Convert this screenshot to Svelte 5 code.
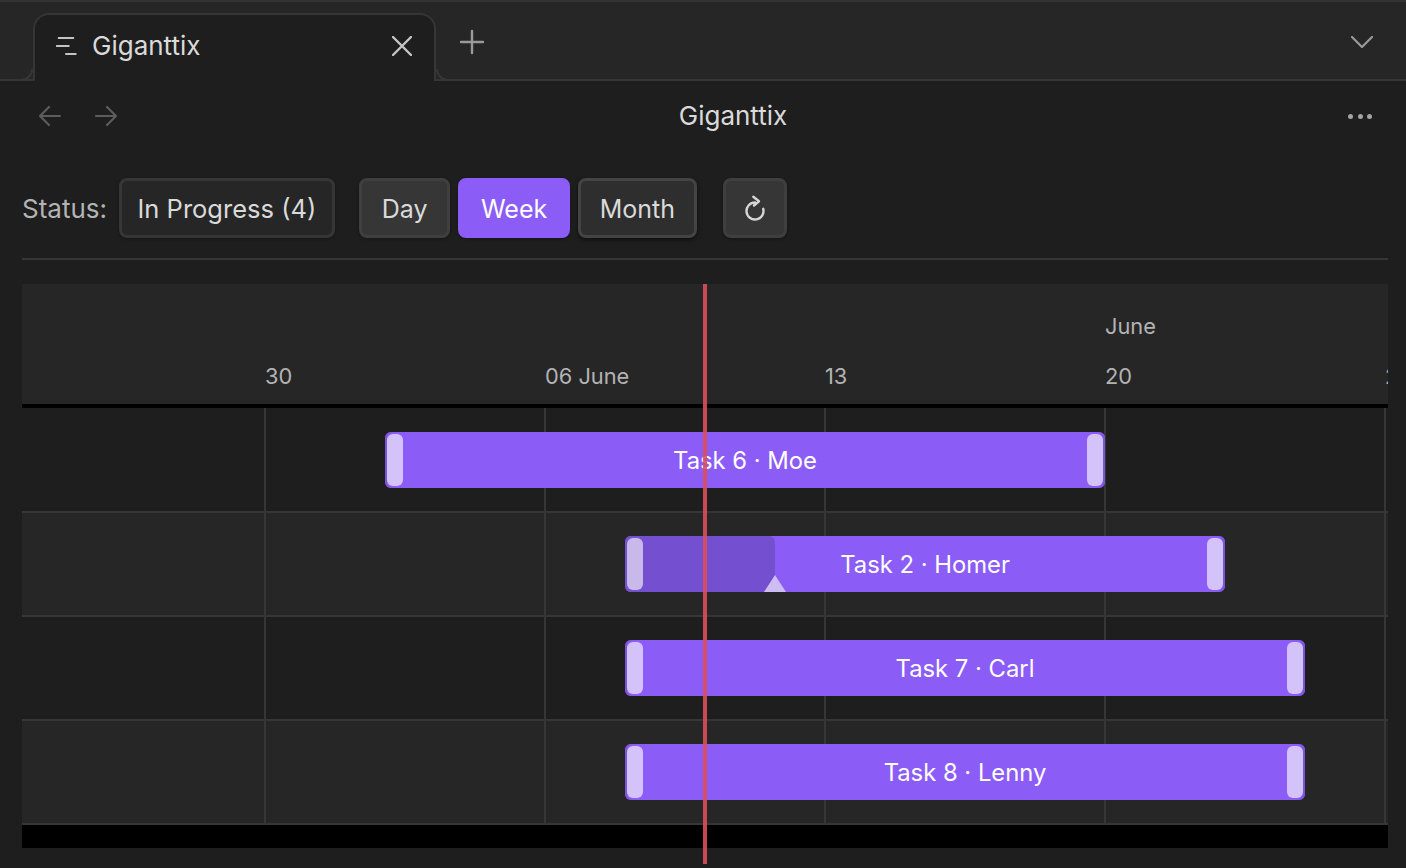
<script>
  const ticks = [
    { x: 243, label: '30' },
    { x: 523, label: '06 June' },
    { x: 803, label: '13' },
    { x: 1083, label: '20' },
    { x: 1363, label: '27' },
  ];

  const tasks = [
    { name: 'Task 6 · Moe', left: 363, width: 720 },
    { name: 'Task 2 · Homer', left: 603, width: 600, progress: 150 },
    { name: 'Task 7 · Carl', left: 603, width: 680 },
    { name: 'Task 8 · Lenny', left: 603, width: 680 },
  ];

  let view = $state('Week');
</script>

<div class="app">
  <div class="tabbar">
    <div class="tab">
      <svg class="tab-icon" width="24" height="24" viewBox="0 0 24 24" fill="none" stroke="#c4c4c4" stroke-width="2" stroke-linecap="round">
        <path d="M2.7 4h14.6M.7 12h12M10 20h9.7" />
      </svg>
      <span class="tab-title">Giganttix</span>
      <svg class="tab-close" width="20" height="20" viewBox="0 0 20 20" fill="none" stroke="#c4c4c4" stroke-width="2.4" stroke-linecap="round">
        <path d="M1 1l18 18M19 1L1 19" />
      </svg>
    </div>
    <svg class="tab-add" width="26" height="26" viewBox="0 0 26 26" fill="none" stroke="#9a9a9a" stroke-width="2.4" stroke-linecap="round">
      <path d="M13 2v22M2 13h22" />
    </svg>
    <svg class="tab-more" width="22" height="12" viewBox="0 0 22 12" fill="none" stroke="#9a9a9a" stroke-width="2.2" stroke-linecap="round" stroke-linejoin="round">
      <path d="M1 1l10 10L21 1" />
    </svg>
  </div>

  <div class="viewhead">
    <div class="nav">
      <svg width="24" height="22" viewBox="0 0 24 22" fill="none" stroke="#5c5c5c" stroke-width="2.2" stroke-linecap="round" stroke-linejoin="round">
        <path d="M22 11H2M11 2l-9 9 9 9" />
      </svg>
      <svg width="24" height="22" viewBox="0 0 24 22" fill="none" stroke="#5c5c5c" stroke-width="2.2" stroke-linecap="round" stroke-linejoin="round">
        <path d="M2 11h20M13 2l9 9-9 9" />
      </svg>
    </div>
    <div class="viewtitle">Giganttix</div>
    <div class="dots"><i></i><i></i><i></i></div>
  </div>

  <div class="toolbar">
    <span class="status">Status:</span>
    <button class="btn filter">In Progress (4)</button>
    <div class="modes">
      {#each ['Day', 'Week', 'Month'] as mode}
        <button class="btn" class:active={view === mode} class:raised={mode === 'Month'} onclick={() => (view = mode)}>{mode}</button>
      {/each}
    </div>
    <button class="btn refresh" aria-label="Refresh">
      <svg width="20" height="26" viewBox="0 -1 20 26" fill="none" stroke="#d6d6d6" stroke-width="2.4" stroke-linecap="round" stroke-linejoin="round">
        <path d="M10 6.5A8.5 8.5 0 1 0 18.2 12.8" />
        <path d="M8.3 .8L14 5.3 9 9.5" />
      </svg>
    </button>
  </div>

  <div class="chart">
    <div class="head">
      <span class="month">June</span>
      {#each ticks as tick}
        <span class="tick" style="left: {tick.x}px">{tick.label}</span>
      {/each}
    </div>
    <div class="body">
      {#each tasks as task}
        <div class="row">
          <div class="bar" style="left: {task.left}px; width: {task.width}px">
            {#if task.progress}
              <div class="progress" style="width: {task.progress}px"></div>
              <div class="marker" style="left: {task.progress - 11}px"></div>
            {/if}
            <span class="handle start" class:dim={task.progress}></span>
            <span class="bar-label">{task.name}</span>
            <span class="handle end"></span>
          </div>
        </div>
      {/each}
      {#each ticks as tick}
        <div class="gridline" style="left: {tick.x - 1}px"></div>
      {/each}
    </div>
    <div class="foot"></div>
    <div class="today"></div>
  </div>
</div>

<style>
  :global(body) {
    background: #1e1e1e;
    font-family: Inter, "Liberation Sans", sans-serif;
    overflow: hidden;
  }

  .app {
    height: 868px;
    overflow: hidden;
  }

  .tabbar {
    display: flex;
    align-items: flex-end;
    height: 77px;
    padding-left: 33px;
    background: #262626;
    border-top: 2px solid #333;
    border-bottom: 2px solid #363636;
  }

  .tab {
    position: relative;
    display: flex;
    align-items: center;
    box-sizing: border-box;
    width: 403px;
    height: 68px;
    margin-bottom: -2px;
    padding: 0 22px 4px 21px;
    background: #1e1e1e;
    border: 2px solid #363636;
    border-bottom: none;
    border-radius: 16px 16px 0 0;
  }

  .tab::before,
  .tab::after {
    content: '';
    position: absolute;
    bottom: 0;
    width: 12px;
    height: 12px;
    box-sizing: border-box;
    border-bottom: 2px solid #363636;
  }

  .tab::before {
    left: -14px;
    border-right: 2px solid #363636;
    border-bottom-right-radius: 12px;
  }

  .tab::after {
    right: -14px;
    border-left: 2px solid #363636;
    border-bottom-left-radius: 12px;
  }

  .tab-icon {
    flex: none;
    margin-right: 12px;
  }

  .tab-title {
    flex: 1;
    margin-bottom: 2px;
    font-size: 26px;
    color: #dadada;
  }

  .tab-close {
    flex: none;
  }

  .tab-add {
    margin: 0 0 24px 23px;
  }

  .tab-more {
    margin: 0 33px 31px auto;
  }

  .viewhead {
    display: flex;
    align-items: center;
    height: 70px;
    padding: 0 34px 0 38px;
  }

  .nav {
    display: flex;
    gap: 32px;
    width: 80px;
  }

  .viewtitle {
    flex: 1;
    margin-bottom: 2px;
    padding-left: 56px;
    text-align: center;
    font-size: 26px;
    color: #dadada;
  }

  .dots {
    display: flex;
    gap: 4.5px;
    width: 80px;
    justify-content: flex-end;
  }

  .dots i {
    width: 5px;
    height: 5px;
    border-radius: 50%;
    background: #a3a3a3;
  }

  .toolbar {
    display: flex;
    align-items: center;
    gap: 12px;
    margin: 27px 18px 0 22px;
    padding-bottom: 20px;
    border-bottom: 2px solid #363636;
  }

  .status {
    font-size: 26px;
    color: #b3b3b3;
  }

  .btn {
    box-sizing: border-box;
    height: 60px;
    padding: 1px 20px 0;
    font: inherit;
    font-size: 25px;
    color: #dadada;
    background: #363636;
    border: 3px solid #3f3f3f;
    border-radius: 8px;
    box-shadow: 0 1px 3px rgba(0, 0, 0, 0.3);
    cursor: pointer;
  }

  .filter {
    padding: 0 15.5px;
    font-size: 25.5px;
    background: #262626;
    border-color: #363636;
  }

  .modes {
    display: flex;
    gap: 8px;
    margin-left: 12px;
  }

  .active {
    padding: 1px 19.5px 0;
    color: #fff;
    background: #8b5cf6;
    border-color: #8b5cf6;
  }

  .raised {
    padding: 1px 19px 0;
    background: #2e2e2e;
    border-color: #444;
    box-shadow: 0 2px 4px rgba(0, 0, 0, 0.5);
  }

  .refresh {
    display: flex;
    align-items: center;
    justify-content: center;
    width: 64px;
    margin-left: 14px;
    padding: 0;
  }

  .chart {
    position: relative;
    margin: 24px 18px 0 22px;
  }

  .head {
    position: relative;
    height: 120px;
    overflow: hidden;
    font-size: 21.8px;
    color: #b3b3b3;
    background: #262626;
    border-bottom: 4px solid #000;
  }

  .month,
  .tick {
    position: absolute;
  }

  .month {
    left: 1083px;
    top: 29px;
  }

  .tick {
    top: 79px;
  }

  .body {
    position: relative;
    padding-bottom: 1px;
  }

  .row {
    position: relative;
    height: 104px;
    background: #1e1e1e;
  }

  .row::after {
    content: '';
    position: absolute;
    right: 0;
    bottom: -1px;
    left: 0;
    z-index: 1;
    height: 2px;
    background: #363636;
  }

  .row:nth-child(even) {
    background: #262626;
  }

  .gridline {
    position: absolute;
    top: 0;
    bottom: 0;
    width: 2px;
    background: #363636;
  }

  .bar {
    position: absolute;
    top: 24px;
    z-index: 2;
    display: flex;
    align-items: stretch;
    justify-content: space-between;
    box-sizing: border-box;
    height: 56px;
    padding: 2px;
    overflow: hidden;
    background: #8b5cf6;
    border-radius: 6px;
    box-shadow: inset 2px 0 #7b54dc, inset -2px 0 #7b54dc;
  }

  .bar-label {
    position: relative;
    align-self: center;
    font-size: 23.8px;
    color: #fff;
  }

  .handle {
    position: relative;
    flex: none;
    width: 16px;
    background: #d4c3fb;
    border-radius: 6px;
  }

  .handle.dim {
    background: #c9b8ea;
  }

  .progress {
    position: absolute;
    top: 0;
    bottom: 0;
    left: 0;
    background: #744fd0;
    border-radius: 0 6px 6px 0;
  }

  .marker {
    position: absolute;
    bottom: 0;
    width: 22px;
    height: 17px;
    background: #cdbdf2;
    clip-path: polygon(50% 0, 100% 100%, 0 100%);
  }

  .foot {
    height: 23px;
    background: #000;
  }

  .today {
    position: absolute;
    top: 0;
    left: 681px;
    z-index: 3;
    width: 4px;
    height: 580px;
    background: #dc4e5a;
    opacity: 0.9;
  }
</style>
